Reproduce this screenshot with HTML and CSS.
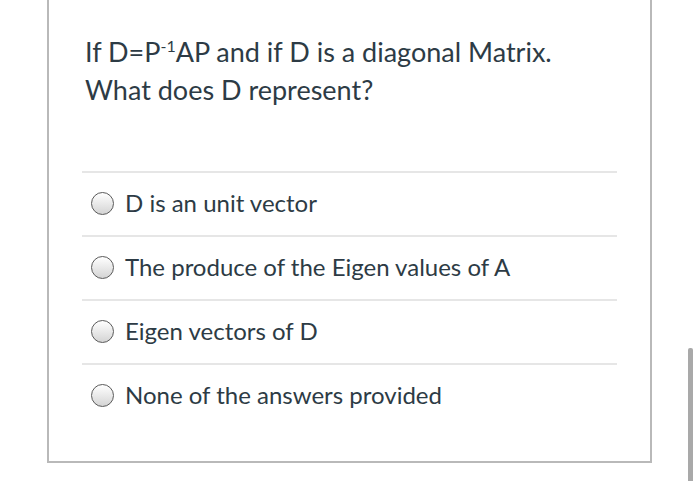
FILE: index.html
```html
<!DOCTYPE html>
<html>
<head>
<meta charset="utf-8">
<link rel="stylesheet" href="styles.css">
</head>
<body>
<div class="card">
  <div class="question">
    <p>If D=P<sup>-1</sup>AP and if D is a diagonal Matrix.</p>
    <p>What does D represent?</p>
  </div>
  <div class="answers">
    <label class="answer"><span class="radio"></span><span class="text">D is an unit vector</span></label>
    <label class="answer"><span class="radio"></span><span class="text">The produce of the Eigen values of A</span></label>
    <label class="answer"><span class="radio"></span><span class="text">Eigen vectors of D</span></label>
    <label class="answer"><span class="radio"></span><span class="text">None of the answers provided</span></label>
  </div>
</div>
<div class="scrollbar"></div>
</body>
</html>
```
FILE: styles.css
```css
html, body {
  margin: 0;
  padding: 0;
  background: #ffffff;
  height: 481px;
  overflow: hidden;
}
body {
  font-family: Lato, "Liberation Sans", sans-serif;
  color: #2d3b45;
}
.card {
  margin-left: 47px;
  width: 601px;
  height: 461px;
  border: 2px solid #b9b9b9;
  border-top: none;
}
.question {
  padding: 33px 35px 0 36px;
  font-size: 27px;
  line-height: 38px;
}
.question p {
  margin: 0;
}
.question sup {
  font-size: 16px;
  line-height: 0;
  vertical-align: 10px;
}
.answers {
  margin: 62px 33px 0 33px;
}
.answer {
  display: flex;
  align-items: center;
  height: 58px;
  padding-bottom: 4px;
  border-top: 2px solid #e6e6e6;
  padding-left: 9px;
  font-size: 24px;
}
.radio {
  width: 21px;
  height: 21px;
  border-radius: 50%;
  border: 1.5px solid #5a5a5a;
  background: linear-gradient(#ffffff, #d4d4d4);
  margin-right: 11px;
  margin-top: 3px;
  flex: none;
}
.scrollbar {
  position: absolute;
  left: 688px;
  top: 348px;
  width: 5px;
  height: 140px;
  background: #a9a9a9;
  border-radius: 2px;
}
```
